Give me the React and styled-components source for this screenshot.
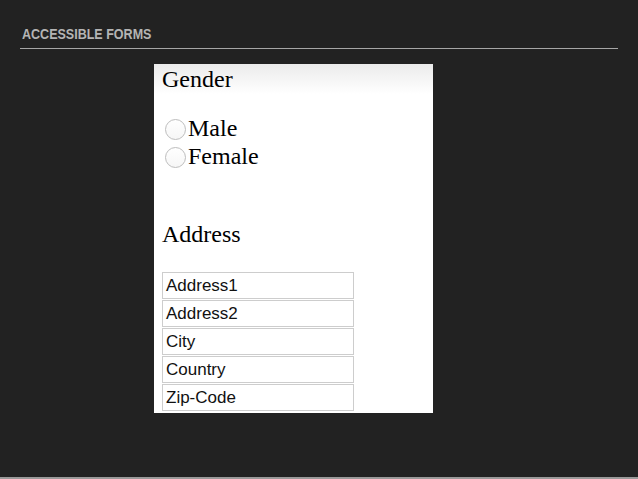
import React from 'react'
import styled, { createGlobalStyle } from 'styled-components'

const GlobalStyle = createGlobalStyle`
    html, body {
        margin: 0;
        padding: 0;
        background: #222222;
    }
`

const Slide = styled.div`
    width: 638px;
    height: 479px;
    box-sizing: border-box;
    border-bottom: 2px solid #9a9a9a;
    background: #222222;
    display: flex;
    flex-direction: column;
    overflow: hidden;
`

const Header = styled.header`
    margin: 0 20px;
    padding: 25px 0 0 2px;
    height: 23px;
    border-bottom: 1px solid #a6a6a6;
`

// DIN-ish narrow caps: no condensed face installed, so squeeze a regular one
const Title = styled.h1`
    margin: 0;
    font-family: "Liberation Sans", Arial, sans-serif;
    font-weight: 700;
    font-size: 15px;
    line-height: 18px;
    color: #b4b4b4;
    white-space: nowrap;
    transform: scaleX(0.835);
    transform-origin: left center;
`

const Frame = styled.section`
    margin: 15px 0 0 154px;
    width: 279px;
    height: 349px;
    background: #fff;
    display: flex;
    flex-direction: column;
    font-family: "Liberation Serif", "Times New Roman", serif;
    color: #000;
`

const Legend = styled.div`
    padding: 1px 8px 0;
    font-size: 24px;
    line-height: 28px;
    background: linear-gradient(to bottom, #ebebeb 0, #ffffff 30px);
    height: 29px;
`

const Options = styled.div`
    margin-top: 20px;
    display: flex;
    flex-direction: column;
`

const Option = styled.label`
    display: flex;
    align-items: center;
    height: 28px;
    padding-left: 11px;
    font-size: 24px;
    line-height: 28px;
`

const Radio = styled.span`
    width: 21px;
    height: 21px;
    box-sizing: border-box;
    margin: 3px 2px 0 0;
    border-radius: 50%;
    border: 1px solid #bdbdbd;
    background: linear-gradient(to bottom, #ffffff, #f6f6f6);
    flex: none;
`

const Heading = styled.div`
    margin-top: 50px;
    padding-left: 8px;
    font-size: 24px;
    line-height: 28px;
`

const Fields = styled.div`
    margin-top: 24px;
    padding-left: 8px;
    display: flex;
    flex-direction: column;
    gap: 1px;
`

const Field = styled.div`
    width: 192px;
    height: 27px;
    box-sizing: border-box;
    border: 1px solid #cdcdcd;
    padding: 0 3px;
    font-family: "Liberation Sans", Arial, sans-serif;
    font-size: 17px;
    line-height: 26px;
    color: #111;
`

const genders = ['Male', 'Female']
const fields = ['Address1', 'Address2', 'City', 'Country', 'Zip-Code']

export default function App() {
    return <>
        <GlobalStyle />
        <Slide>
            <Header>
                <Title>ACCESSIBLE FORMS</Title>
            </Header>
            <Frame>
                <Legend>Gender</Legend>
                <Options>
                    {genders.map(g => (
                        <Option key={g}><Radio />{g}</Option>
                    ))}
                </Options>
                <Heading>Address</Heading>
                <Fields>
                    {fields.map(f => <Field key={f}>{f}</Field>)}
                </Fields>
            </Frame>
        </Slide>
    </>
}
